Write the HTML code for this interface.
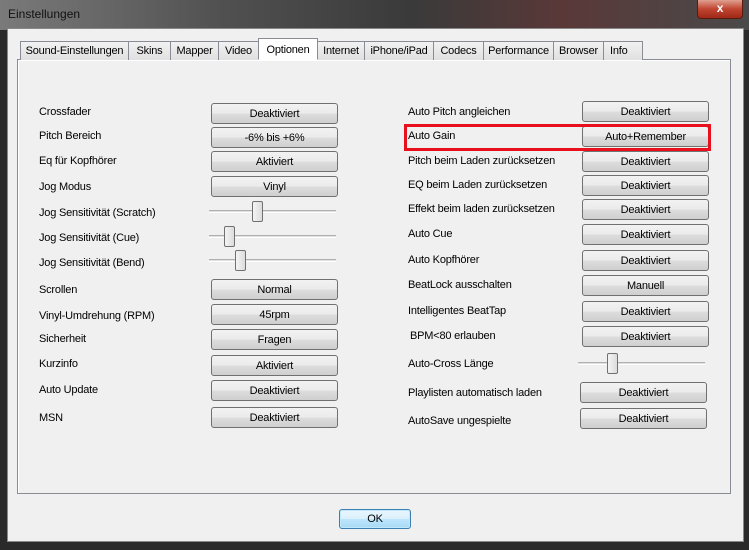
<!DOCTYPE html>
<html><head><meta charset="utf-8"><style>
*{margin:0;padding:0;box-sizing:border-box}
body{width:749px;height:550px;overflow:hidden;background:#2a2a2a;font-family:"Liberation Sans",sans-serif;font-size:11px;color:#000;position:relative;letter-spacing:-0.2px}
.title{position:absolute;left:0;top:0;width:749px;height:30px;background:linear-gradient(90deg,#7a7a7a 0%,#505050 30%,#3a3a3a 55%,#5a3838 75%,#4a4a4a 100%)}
.title span{position:absolute;left:8px;top:7px;font-size:12px;color:#111;letter-spacing:0}
.close{position:absolute;left:697px;top:0;width:46px;height:19px;border:1px solid #5a1a10;border-top:none;border-radius:0 0 4px 4px;background:linear-gradient(#e0a090,#c04530 50%,#a02818);color:#fff;font-weight:bold;text-align:center;font-size:12px;line-height:17px}
.client{position:absolute;left:7px;top:28px;width:737px;height:514px;background:#f0f0f0;border:1px solid #888}
.panel{position:absolute;left:17px;top:59px;width:714px;height:435px;border:1px solid #898c95;background:#f0f0f0;box-shadow:inset 1px 1px 0 #fff}
.tab{position:absolute;top:41px;height:19px;border:1px solid #898c95;border-bottom:none;background:linear-gradient(#f2f2f2,#e0e0e0);text-align:center;line-height:18px;font-size:11px}
.tab.sel{top:38px;height:22px;background:#fff;line-height:22px;z-index:2;border-bottom:1px solid #fff}
.l{position:absolute;font-size:11px;white-space:nowrap;margin-top:1px}
.b{position:absolute;width:127px;height:21px;border:1px solid #707070;border-radius:3px;background:linear-gradient(#f2f2f2 0%,#ebebeb 50%,#dddddd 51%,#cfcfcf 100%);text-align:center;line-height:20px;font-size:11px}
.tr{position:absolute;height:3px;border-top:1px solid #b0b0b0;border-bottom:1px solid #fff;background:#e0e0e0}
.th{position:absolute;width:11px;height:21px;border:1px solid #707070;border-radius:2px;background:linear-gradient(90deg,#f4f4f4,#dcdcdc)}
.red{position:absolute;left:404px;top:124px;width:307px;height:27px;border:3px solid #e8101c}
.ok{position:absolute;left:339px;top:509px;width:72px;height:20px;border:1px solid #3c7fb1;border-radius:3px;background:linear-gradient(#eaf6fd,#d9f0fc 50%,#bee6fd 51%,#a7d9f5);box-shadow:inset 0 0 0 1px #bfe8fb;text-align:center;line-height:18px}
</style></head><body>
<div class="title"><span>Einstellungen</span></div>
<div class="close">x</div>
<div class="client"></div>
<div class="panel"></div>
<div class="tab" style="left:20px;width:109px">Sound-Einstellungen</div>
<div class="tab" style="left:128px;width:43px">Skins</div>
<div class="tab" style="left:170px;width:49px">Mapper</div>
<div class="tab" style="left:218px;width:41px">Video</div>
<div class="tab sel" style="left:258px;width:60px">Optionen</div>
<div class="tab" style="left:317px;width:48px">Internet</div>
<div class="tab" style="left:364px;width:70px">iPhone/iPad</div>
<div class="tab" style="left:433px;width:51px">Codecs</div>
<div class="tab" style="left:483px;width:71px">Performance</div>
<div class="tab" style="left:553px;width:51px">Browser</div>
<div class="tab" style="left:603px;width:40px;text-align:left;padding-left:6px">Info</div>

<div class="l" style="left:39px;top:105px">Crossfader</div>
<div class="l" style="left:39px;top:129px">Pitch Bereich</div>
<div class="l" style="left:39px;top:154px">Eq für Kopfhörer</div>
<div class="l" style="left:39px;top:180px">Jog Modus</div>
<div class="l" style="left:39px;top:206px">Jog Sensitivität (Scratch)</div>
<div class="l" style="left:39px;top:231px">Jog Sensitivität (Cue)</div>
<div class="l" style="left:39px;top:256px">Jog Sensitivität (Bend)</div>
<div class="l" style="left:39px;top:283px">Scrollen</div>
<div class="l" style="left:39px;top:309px">Vinyl-Umdrehung (RPM)</div>
<div class="l" style="left:39px;top:332px">Sicherheit</div>
<div class="l" style="left:39px;top:357px">Kurzinfo</div>
<div class="l" style="left:39px;top:383px">Auto Update</div>
<div class="l" style="left:39px;top:411px">MSN</div>

<div class="b" style="left:211px;top:103px">Deaktiviert</div>
<div class="b" style="left:211px;top:127px">-6% bis +6%</div>
<div class="b" style="left:211px;top:151px">Aktiviert</div>
<div class="b" style="left:211px;top:176px">Vinyl</div>
<div class="tr" style="left:209px;top:210px;width:127px"></div><div class="th" style="left:252px;top:201px"></div>
<div class="tr" style="left:209px;top:235px;width:127px"></div><div class="th" style="left:224px;top:226px"></div>
<div class="tr" style="left:209px;top:259px;width:127px"></div><div class="th" style="left:235px;top:250px"></div>
<div class="b" style="left:211px;top:279px">Normal</div>
<div class="b" style="left:211px;top:304px">45rpm</div>
<div class="b" style="left:211px;top:329px">Fragen</div>
<div class="b" style="left:211px;top:355px">Aktiviert</div>
<div class="b" style="left:211px;top:380px">Deaktiviert</div>
<div class="b" style="left:211px;top:407px">Deaktiviert</div>

<div class="l" style="left:408px;top:105px">Auto Pitch angleichen</div>
<div class="l" style="left:408px;top:129px">Auto Gain</div>
<div class="l" style="left:408px;top:154px">Pitch beim Laden zurücksetzen</div>
<div class="l" style="left:408px;top:178px">EQ beim Laden zurücksetzen</div>
<div class="l" style="left:408px;top:202px">Effekt beim laden zurücksetzen</div>
<div class="l" style="left:408px;top:227px">Auto Cue</div>
<div class="l" style="left:408px;top:253px">Auto Kopfhörer</div>
<div class="l" style="left:408px;top:278px">BeatLock ausschalten</div>
<div class="l" style="left:408px;top:304px">Intelligentes BeatTap</div>
<div class="l" style="left:410px;top:329px">BPM&lt;80 erlauben</div>
<div class="l" style="left:408px;top:357px">Auto-Cross Länge</div>
<div class="l" style="left:408px;top:386px">Playlisten automatisch laden</div>
<div class="l" style="left:408px;top:414px">AutoSave ungespielte</div>

<div class="b" style="left:582px;top:101px">Deaktiviert</div>
<div class="b" style="left:582px;top:126px">Auto+Remember</div>
<div class="b" style="left:582px;top:151px">Deaktiviert</div>
<div class="b" style="left:582px;top:175px">Deaktiviert</div>
<div class="b" style="left:582px;top:199px">Deaktiviert</div>
<div class="b" style="left:582px;top:224px">Deaktiviert</div>
<div class="b" style="left:582px;top:250px">Deaktiviert</div>
<div class="b" style="left:582px;top:275px">Manuell</div>
<div class="b" style="left:582px;top:301px">Deaktiviert</div>
<div class="b" style="left:582px;top:326px">Deaktiviert</div>
<div class="tr" style="left:578px;top:362px;width:127px"></div><div class="th" style="left:607px;top:353px"></div>
<div class="b" style="left:580px;top:382px">Deaktiviert</div>
<div class="b" style="left:580px;top:408px">Deaktiviert</div>
<div class="red"></div>
<div class="ok">OK</div>
</body></html>
